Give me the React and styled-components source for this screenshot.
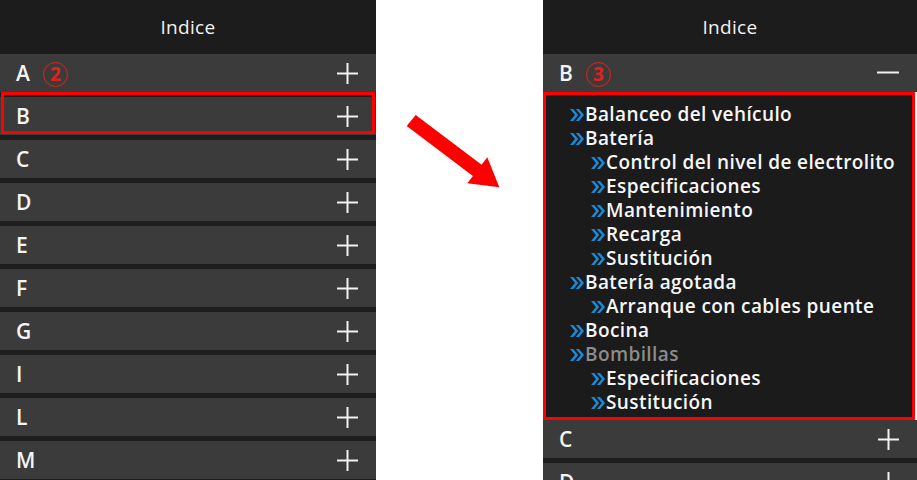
import React from 'react';
import styled, { createGlobalStyle } from 'styled-components';

const GlobalStyle = createGlobalStyle`
  html, body {
    margin: 0;
    padding: 0;
    background: #ffffff;
    overflow: hidden;
  }
`;

const Page = styled.div`
  display: flex;
  width: 917px;
  height: 480px;
  overflow: hidden;
  font-family: "Open Sans", "Liberation Sans", sans-serif;
`;

const Panel = styled.div`
  width: ${({ w }) => w}px;
  flex-shrink: 0;
  display: flex;
  flex-direction: column;
`;

const Gap = styled.div`
  width: 167px;
  flex-shrink: 0;
`;

const Header = styled.div`
  height: 54px;
  flex-shrink: 0;
  background: #1c1c1c;
  color: #f2f2f2;
  display: flex;
  align-items: center;
  justify-content: center;
  font-size: 19px;
  font-weight: 500;
  letter-spacing: 0.3px;
`;

const Row = styled.div`
  position: relative;
  flex-shrink: 0;
  height: 38px;
  box-sizing: content-box;
  background: #3b3b3b;
  border-bottom: ${({ open }) => (open ? '0' : '5px solid #1e1e1e')};
  display: flex;
  align-items: center;
  padding: 0 18px 0 16px;
  color: #f4f4f4;
  font-size: 21px;
  font-weight: 600;

  ${({ marked }) =>
    marked &&
    `
    &::after {
      content: "";
      position: absolute;
      left: 1px;
      right: 1px;
      top: -5px;
      bottom: 1px;
      border: 3px solid #ff0000;
      pointer-events: none;
    }
  `}
`;

const Letter = styled.span`
  width: 27px;
`;

const Step = styled.span`
  width: 23px;
  height: 23px;
  border: 1.5px solid #e3211c;
  border-radius: 50%;
  color: #e3211c;
  font-size: 19px;
  font-weight: 700;
  line-height: 23px;
  text-align: center;
  margin-top: 2px;
`;

const Spacer = styled.span`
  flex: 1;
`;

const Content = styled.div`
  flex-shrink: 0;
  height: 328px;
  box-sizing: border-box;
  border: 3px solid #ff0000;
  margin-right: 2px;
  background: #1b1b1b;
  padding: 7px 0 3px 24px;
`;

const Item = styled.div`
  display: flex;
  align-items: center;
  height: 24px;
  line-height: 24px;
  padding-left: ${({ level }) => (level - 1) * 21}px;
  color: ${({ muted }) => (muted ? '#8c8c8c' : '#f6f6f6')};
  font-size: 19px;
  font-weight: 600;
  white-space: nowrap;
  letter-spacing: 0.4px;

  svg {
    flex-shrink: 0;
    margin: 1px 1px 0 0;
  }
`;

const Chevron = () => (
  <svg width="14" height="12" viewBox="0 0 14 12">
    <path
      fill="#1a8bd8"
      d="M0 0h3.2l5 6-5 6H0l5-6zM5.8 0H9l5 6-5 6H5.8l5-6z"
    />
  </svg>
);

const Plus = () => (
  <svg width="21" height="21" viewBox="0 0 21 21">
    <path d="M10.5 0v21M0 10.5h21" stroke="#f2f2f2" strokeWidth="2" />
  </svg>
);

const Minus = () => (
  <svg width="22" height="21" viewBox="0 0 22 21">
    <path d="M0 9.5h22" stroke="#f2f2f2" strokeWidth="2" />
  </svg>
);

const Arrow = () => (
  <svg width="167" height="200" viewBox="0 0 167 200">
    <polygon
      fill="#ff0000"
      points="39.7,115 30.7,126 96.9,176 91.3,183.3 123.3,187.3 111.3,157.3 105.6,164.8"
    />
  </svg>
);

const letters = ['A', 'B', 'C', 'D', 'E', 'F', 'G', 'I', 'L', 'M'];

const items = [
  { level: 1, text: 'Balanceo del vehículo' },
  { level: 1, text: 'Batería' },
  { level: 2, text: 'Control del nivel de electrolito' },
  { level: 2, text: 'Especificaciones' },
  { level: 2, text: 'Mantenimiento' },
  { level: 2, text: 'Recarga' },
  { level: 2, text: 'Sustitución' },
  { level: 1, text: 'Batería agotada' },
  { level: 2, text: 'Arranque con cables puente' },
  { level: 1, text: 'Bocina' },
  { level: 1, text: 'Bombillas', muted: true },
  { level: 2, text: 'Especificaciones' },
  { level: 2, text: 'Sustitución' },
];

export default function App() {
  return (
    <>
      <GlobalStyle />
      <Page>
        <Panel w={376}>
          <Header>Indice</Header>
          {letters.map((l) => (
            <Row key={l} marked={l === 'B'}>
              <Letter>{l}</Letter>
              {l === 'A' && <Step>2</Step>}
              <Spacer />
              <Plus />
            </Row>
          ))}
        </Panel>

        <Gap>
          <Arrow />
        </Gap>

        <Panel w={374}>
          <Header>Indice</Header>
          <Row open>
            <Letter>B</Letter>
            <Step>3</Step>
            <Spacer />
            <Minus />
          </Row>
          <Content>
            {items.map((it, i) => (
              <Item key={i} level={it.level} muted={it.muted}>
                <Chevron />
                <span>{it.text}</span>
              </Item>
            ))}
          </Content>
          <Row>
            <Letter>C</Letter>
            <Spacer />
            <Plus />
          </Row>
          <Row>
            <Letter>D</Letter>
            <Spacer />
            <Plus />
          </Row>
        </Panel>
      </Page>
    </>
  );
}
